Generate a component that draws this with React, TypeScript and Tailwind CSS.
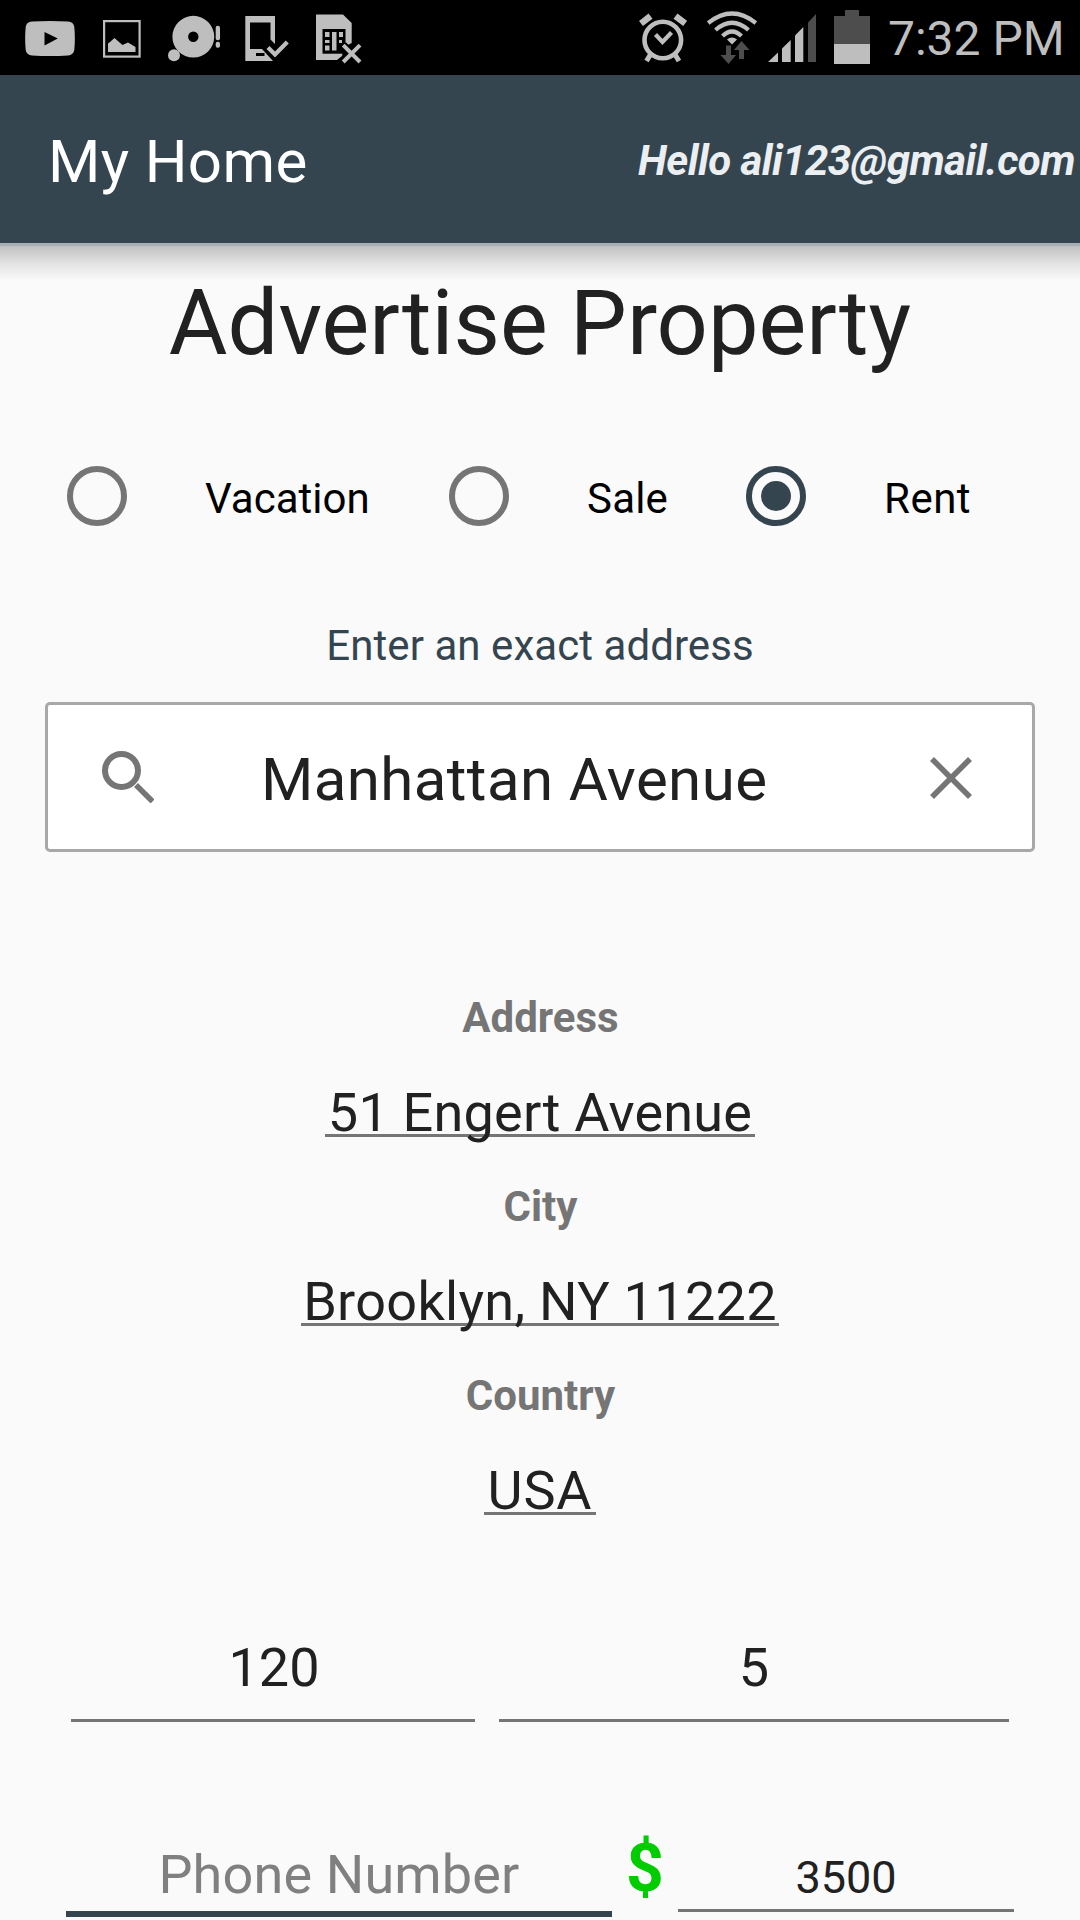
import { useState } from "react";

const listingTypes = [
  { name: "Vacation", width: "w-[382px]", tracking: "tracking-normal" },
  { name: "Sale", width: "w-[297px]", tracking: "tracking-[0.2px]" },
  { name: "Rent", width: "w-[260px]", tracking: "tracking-[0.5px]" },
];

const addressFields = [
  { label: "Address", value: "51 Engert Avenue", width: "w-[430px]", tracking: "tracking-[0.22px]" },
  { label: "City", value: "Brooklyn, NY 11222", width: "w-[478px]", tracking: "tracking-[0.3px]" },
  { label: "Country", value: "USA", width: "w-[112px]", tracking: "tracking-[0.9px]" },
];

function StatusBar() {
  return (
    <div className="flex h-[75px] items-center bg-black pl-[25px] text-[#bebebe]">
      {/* Video */}
      <svg className="h-[75px] w-[50px]" viewBox="25 0 50 75" fill="currentColor">
        <path
          fillRule="evenodd"
          d="M32 21.6Q50 20.6 68 21.6Q73.6 22 74.3 27Q75.4 38.5 74.3 50Q73.6 55 68 55.4Q50 56.4 32 55.4Q26.4 55 25.7 50Q24.6 38.5 25.7 27Q26.4 22 32 21.6ZM44.5 32V45.5L57.8 38.6Z"
        />
      </svg>
      {/* Picture */}
      <svg className="ml-[28px] h-[75px] w-[38px]" viewBox="103 0 38 75">
        <rect x="104.1" y="21.1" width="35.5" height="35.5" fill="none" stroke="currentColor" strokeWidth="2.2" />
        <path d="M108 52V43.5L110 42L114.5 38L119 42L122.5 45L128 42.5L133 45.5L135.5 47V52Z" fill="currentColor" />
      </svg>
      {/* Disc alert */}
      <svg className="ml-[27px] h-[75px] w-[53px]" viewBox="168 0 53 75" fill="currentColor">
        <circle cx="193.3" cy="36.7" r="22" fill="black" />
        <path
          fillRule="evenodd"
          d="M193.3 15.8a20.9 20.9 0 1 1 0 41.8a20.9 20.9 0 1 1 0-41.8ZM193.3 31.5a5.2 5.2 0 1 0 0 10.4a5.2 5.2 0 1 0 0-10.4Z"
        />
        <circle cx="174" cy="55.2" r="6" />
        <rect x="215.7" y="25.7" width="4.3" height="14.5" rx="2" />
        <rect x="215.7" y="41.7" width="4.3" height="6" rx="2" />
      </svg>
      {/* Device check */}
      <svg className="ml-[24px] h-[75px] w-[44px]" viewBox="245 0 44 75" fill="currentColor">
        <path fillRule="evenodd" d="M245.3 16H275V44L270.5 39.5V22.5H250V49H262L273 61H245.3ZM256 53V56H264.5V53Z" />
        <path d="M268 47.5L275 54.5L287.3 42" fill="none" stroke="currentColor" strokeWidth="4.2" />
      </svg>
      {/* SIM card missing */}
      <svg className="ml-[27px] h-[75px] w-[46px]" viewBox="316 0 46 75">
        <path d="M316 14.5H343L351.7 23V43L344 47L342 56L337 60H316Z" fill="currentColor" />
        <rect x="322.5" y="29" width="23" height="24.7" fill="black" />
        <g fill="currentColor">
          <rect x="325" y="32" width="4.5" height="5" />
          <rect x="325" y="40" width="4.5" height="3" />
          <rect x="325" y="45.5" width="4.5" height="5" />
          <rect x="332" y="32" width="4.5" height="18.5" />
          <rect x="339" y="32" width="4" height="5" />
          <rect x="339" y="40" width="3" height="3" />
        </g>
        <path d="M343 45L360 62M360 45L343 62" stroke="black" strokeWidth="8" />
        <path d="M343.2 45.2L360 62M360 45.2L343.2 62" stroke="currentColor" strokeWidth="4" />
      </svg>

      {/* Alarm */}
      <svg className="ml-[277px] h-[75px] w-[48px]" viewBox="639 0 48 75" fill="none" stroke="currentColor">
        <circle cx="662.8" cy="40" r="18.3" strokeWidth="4.6" />
        <path d="M655.5 34.5L662.5 42L671.5 32.5" strokeWidth="4.2" />
        <path d="M641 23.5L650.5 16.2M685.2 23.5L675.5 16.2" strokeWidth="6.5" />
        <path d="M650.5 54.5L646.5 61M675 54.5L679 61" strokeWidth="5" />
      </svg>
      {/* Wi-Fi with traffic arrows */}
      <svg className="ml-[20px] h-[75px] w-[50px]" viewBox="707 0 50 75">
        <g fill="none" stroke="currentColor" strokeWidth="4.2">
          <path d="M708.2 23Q732 4 755.8 23" />
          <path d="M715.5 30Q732 15.5 748.5 30" />
          <path d="M722.5 36Q732 27 741.5 36" />
        </g>
        <path d="M727 39.5Q732 35.5 737 39.5L732 44.5Z" fill="currentColor" />
        <path d="M726 45.5H731V55H736L728.5 64L720.5 55H726Z" fill="#4d4d4d" />
        <path d="M739 59V50H734L741.5 41L749.5 50H744V59Z" fill="#4d4d4d" />
      </svg>
      {/* Signal */}
      <svg className="ml-[11px] h-[75px] w-[48px]" viewBox="768 0 48 75" fill="currentColor">
        <path d="M768 62L778 52.5V62Z" />
        <path d="M782 62V48.5L790.7 40V62Z" />
        <path d="M795 62V35.5L803.3 27V62Z" />
        <path d="M808 62V22.5L816 14V62Z" fill="#4d4d4d" />
      </svg>
      {/* Battery */}
      <svg className="ml-[18px] h-[75px] w-[36px]" viewBox="834 0 36 75">
        <path d="M834 16H845V10H859V16H870V44H834Z" fill="#4d4d4d" />
        <rect x="834" y="44" width="36" height="20" fill="currentColor" />
      </svg>
      <span className="ml-[18px] pt-[3px] text-[48px] leading-[56px] whitespace-nowrap">7:32 PM</span>
    </div>
  );
}

function Header() {
  return (
    <header className="relative flex h-[171px] items-center justify-between border-b-[3px] border-[#a6afb5] bg-[#344550] pr-[5px] pl-[48px] whitespace-nowrap">
      <h1 className="pt-[5px] text-[60px] leading-[70px] tracking-[0.35px] text-white">My Home</h1>
      <span className="pt-[3px] text-[42px] leading-[50px] font-bold tracking-[-0.55px] text-[#eceff1] italic">
        Hello ali123@gmail.com
      </span>
      {/* Drop shadow under the bar */}
      <div className="absolute inset-x-0 top-[171px] h-[35px] bg-linear-to-b from-[#c0c0c0] via-[#e3e3e3] to-[#fafafa]" />
    </header>
  );
}

export default function App() {
  const [listingType, setListingType] = useState("Rent");

  return (
    <div className="h-[1920px] w-[1080px] overflow-hidden bg-[#fafafa] font-[Roboto,sans-serif] text-[#212121]">
      <StatusBar />
      <Header />

      <main>
        <h2 className="relative mt-[25px] text-center text-[90px] leading-[106px] tracking-[0.05px]">Advertise Property</h2>

        {/* Listing type */}
        <div className="mt-[89px] flex pl-[67px]">
          {listingTypes.map((type) => (
            <button
              key={type.name}
              onClick={() => setListingType(type.name)}
              className={`flex h-[60px] items-center ${type.width}`}
            >
              <span
                className={`flex size-[60px] shrink-0 items-center justify-center rounded-full border-[6px] ${
                  listingType === type.name ? "border-[#344550]" : "border-[#757575]"
                }`}
              >
                {listingType === type.name && <span className="size-[30px] rounded-full bg-[#344550]" />}
              </span>
              <span className={`ml-[78px] pt-[6px] text-[42px] leading-[50px] text-black ${type.tracking}`}>{type.name}</span>
            </button>
          ))}
        </div>

        <p className="mt-[95px] text-center text-[42px] leading-[50px] tracking-[0.06px] text-[#344550]">
          Enter an exact address
        </p>

        {/* Place search */}
        <div className="mx-[45px] mt-[31px] flex h-[150px] items-center rounded-[5px] border-[3px] border-[#a8a8a8] bg-white">
          <svg className="ml-[54px] size-[52px] shrink-0" viewBox="0 0 52 52" fill="none" stroke="#757575" strokeWidth="6">
            <circle cx="19.5" cy="19.5" r="16.5" />
            <path d="M34 34L50.5 50.5" strokeWidth="5.5" />
          </svg>
          <span className="ml-[107px] w-[669px] pt-[5px] text-[60px] leading-[70px] tracking-[0.4px]">
            Manhattan Avenue
          </span>
          <svg className="mt-[2px] size-[42px] shrink-0" viewBox="0 0 42 42" fill="none" stroke="#757575" strokeWidth="5.6">
            <path d="M2 2L40 40M40 2L2 40" />
          </svg>
        </div>

        {/* Resolved address */}
        <div className="mt-[96px] flex flex-col items-center">
          {addressFields.map((field) => (
            <div key={field.label} className="mt-[45px] flex flex-col items-center">
              <span className="pl-px text-[42px] leading-[50px] font-bold text-[#757575]">{field.label}</span>
              <span
                className={`mt-[39px] flex h-[55px] justify-center border-b-[3px] border-[#757575] text-[54px] leading-[62px] whitespace-nowrap ${field.width} ${field.tracking}`}
              >
                {field.value}
              </span>
            </div>
          ))}
        </div>

        <div className="mt-[122px] flex gap-6 pl-[71px] text-center text-[54px] leading-[62px]">
          <div className="h-[85px] w-[404px] border-b-[3px] border-[#757575] pl-[2px]">120</div>
          <div className="h-[85px] w-[510px] border-b-[3px] border-[#757575]">5</div>
        </div>

        <div className="mt-[112px] flex pl-[66px] text-center">
          <div className="mt-[10px] h-[73px] w-[546px] border-b-[6px] border-[#344550] text-[54px] leading-[62px] tracking-[0.15px] text-[#808080]">
            Phone Number
          </div>
          <span className="w-[66px] pt-[2px] text-[66px] leading-[66px] font-bold text-[#00cc00]">$</span>
          <div className="mt-[17px] h-[61px] w-[336px] border-b-[3px] border-[#757575] pt-px text-[45px] leading-[52px]">3500</div>
        </div>
      </main>
    </div>
  );
}
